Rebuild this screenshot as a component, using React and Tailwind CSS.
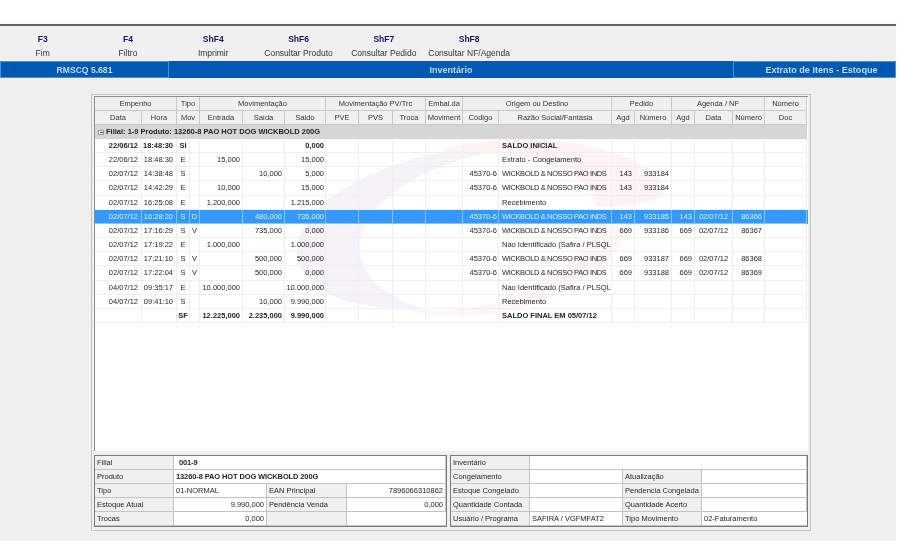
const GRID = "grid grid-cols-[47px_35px_13px_10px_43px_42px_41px_33px_34px_33px_37px_36px_113px_23px_37px_23px_38px_32px_42px]";
const align = [
  "text-right pr-[3px]", "text-right pr-[3px]", "text-center", "text-center",
  "text-right pr-[2px]", "text-right pr-[2px]", "text-right pr-[1px]", "", "", "", "",
  "text-right pr-[1px]", "text-left pl-[3px]", "text-right pr-[2px]", "text-right pr-[2px]", "text-right pr-[2px]",
  "text-center", "text-right pr-[2px]", "",
];

const W = "WICKBOLD & NOSSO PAO INDS";
const N = "Nao Identificado (Safira / PLSQL";
const rows = [
  { b: 1, c: ["22/06/12","18:48:30","SI","","","","0,000","","","","","","SALDO INICIAL","","","","","",""] },
  { c: ["22/06/12","18:48:30","E","","15,000","","15,000","","","","","","Extrato - Congelamento","","","","","",""] },
  { c: ["02/07/12","14:38:48","S","","","10,000","5,000","","","","","45370-6",W,"143","933184","","","",""] },
  { c: ["02/07/12","14:42:29","E","","10,000","","15,000","","","","","45370-6",W,"143","933184","","","",""] },
  { c: ["02/07/12","16:25:08","E","","1.200,000","","1.215,000","","","","","","Recebimento","","","","","",""] },
  { s: 1, c: ["02/07/12","16:28:20","S","D","","480,000","735,000","","","","","45370-6",W,"143","933185","143","02/07/12","86366",""] },
  { c: ["02/07/12","17:16:29","S","V","","735,000","0,000","","","","","45370-6",W,"669","933186","669","02/07/12","86367",""] },
  { c: ["02/07/12","17:19:22","E","","1.000,000","","1.000,000","","","","","",N,"","","","","",""] },
  { c: ["02/07/12","17:21:10","S","V","","500,000","500,000","","","","","45370-6",W,"669","933187","669","02/07/12","86368",""] },
  { c: ["02/07/12","17:22:04","S","V","","500,000","0,000","","","","","45370-6",W,"669","933188","669","02/07/12","86369",""] },
  { c: ["04/07/12","09:35:17","E","","10.000,000","","10.000,000","","","","","",N,"","","","","",""] },
  { c: ["04/07/12","09:41:10","S","","","10,000","9.990,000","","","","","","Recebimento","","","","","",""] },
  { b: 1, c: ["","","SF","","12.225,000","2.235,000","9.990,000","","","","","","SALDO FINAL EM 05/07/12","","","","","",""] },
];

const keys = [["F3","Fim"],["F4","Filtro"],["ShF4","Imprimir"],["ShF6","Consultar Produto"],["ShF7","Consultar Pedido"],["ShF8","Consultar NF/Agenda"]];

const head1 = [
  ["Empenho","col-span-2"],["Tipo","col-span-2"],["Movimentação","col-span-3"],["Movimentação PV/Trc","col-span-3"],
  ["Embal.da",""],["Origem ou Destino","col-span-2"],["Pedido","col-span-2"],["Agenda / NF","col-span-3"],["Número",""],
];
const head2 = [
  ["Data",""],["Hora",""],["Mov","col-span-2"],["Entrada",""],["Saída",""],["Saldo",""],["PVE",""],["PVS",""],["Troca",""],
  ["Moviment",""],["Código",""],["Razão Social/Fantasia",""],["Agd",""],["Número",""],["Agd",""],["Data",""],["Número",""],["Doc",""],
];

function HeadRow({ items }) {
  return (
    <div className={`${GRID} h-[14px]`}>
      {items.map(([t, span], i) => (
        <div key={i} className={`${span} overflow-hidden whitespace-nowrap border-r border-b border-[#c9c9c9] bg-[#f0f0f0] text-center leading-[14px] text-[#333333]`}>{t}</div>
      ))}
    </div>
  );
}

function Row({ r }) {
  return (
    <div className={`${GRID} h-[14.17px] ${r.s ? "bg-[#3399ff] text-[#dcebfb]" : "text-[#262626]"} ${r.b ? "font-bold" : ""}`}>
      {r.c.map((t, i) => (
        <div key={i} className={`${align[i]} overflow-hidden whitespace-nowrap border-r border-b leading-[14px] ${t === W ? "tracking-[-0.37px]" : ""} ${r.s ? "border-[#8cc4fb]" : "border-[#efefef]"}`}>{t}</div>
      ))}
    </div>
  );
}

function Cell({ t, label, right, span, bold }) {
  return (
    <div className={`${span || ""} h-[14px] overflow-hidden whitespace-nowrap border-r border-b border-[#c4c4c4] px-[2px] leading-[14px] last:border-r-0 ${label ? "bg-[#f0f0f0]" : "bg-[#ffffffe6]"} ${right ? "text-right" : ""} ${bold ? "font-bold tracking-[-0.12px]" : ""}`}>{t}</div>
  );
}

export default function App() {
  return (
    <div className="h-[541px] w-[899px] overflow-hidden bg-white font-['Liberation_Sans',Arial,sans-serif] text-[7.5px] text-[#262626] blur-[0.25px]">
      <div className="h-[24px]" />
      <div className="h-[517px] w-[896px] border-t-2 border-[#6f6168] bg-[#f0f0f0]">
        <div className="flex pt-[6px]">
          {keys.map(([k, l]) => (
            <div key={k} className="w-[85.3px] text-center">
              <div className="h-[14px] text-[8.5px] font-bold leading-[14px] text-[#14146e]">{k}</div>
              <div className="h-[14px] whitespace-nowrap text-[8.5px] leading-[14px] text-[#333333]">{l}</div>
            </div>
          ))}
        </div>
        <div className="mt-[1px] flex h-[17px] bg-[#0059b3] font-bold leading-[16px] text-[#c6d9ee]">
          <div className="w-[169px] border border-[#4d8fd0] text-center text-[8.6px]">RMSCQ 5.681</div>
          <div className="w-[564px] border-y border-[#0059b3] text-center text-[9px]">Inventário</div>
          <div className="flex-1 border border-[#4d8fd0] pl-[14px] text-center text-[9.1px]">Extrato de Itens - Estoque</div>
        </div>

        <div className="ml-[91px] mt-[16px] h-[437px] w-[720px] border border-[#c4c4c4] pl-[2px] pt-[1px]">
          <div className="relative h-[355px] w-[714px] border-l border-t border-[#8c8c8c] bg-white">
            <svg className="absolute left-0 top-0" width="713" height="354" viewBox="95 97 713 354" fill="none">
              <path d="M473 146 C 380 160 300 200 297 250 C 296 290 350 312 420 308 C 385 295 355 275 360 240 C 370 195 430 165 490 152 Z" fill="#f6f3f8" />
              <path d="M440 150 C 500 132 600 135 650 170 C 680 195 665 205 595 207 C 600 185 560 152 440 150 Z" fill="#fdf3f3" />
              <path d="M400 308 C 480 320 560 290 590 235 C 600 225 625 225 632 228 C 600 290 500 335 400 308 Z" fill="#fdf5f6" />
            </svg>
            <div className="relative">
              <HeadRow items={head1} />
              <HeadRow items={head2} />
              <div className="flex h-[14px] w-[712px] items-center gap-[2px] bg-[#d6d6d6] pl-[3px] font-bold text-[#222222]">
                <span className="flex h-[5px] w-[6px] items-center justify-center border border-[#9a9a9a] bg-[#eeeeee]"><span className="h-px w-[3px] bg-[#555555]" /></span>
                <span>Filial: 1-9 Produto: 13260-8 PAO HOT DOG WICKBOLD 200G</span>
              </div>
              {rows.map((r, i) => <Row key={i} r={r} />)}
            </div>
          </div>
          <div className="mt-[4px] flex gap-[3px]">
            <div className="grid w-[353px] grid-cols-[79px_93px_80px_99px] border border-[#7a7a7a]">
              <Cell label t="Filial" /><Cell span="col-span-3 pl-[5px]" bold t="001-9" />
              <Cell label t="Produto" /><Cell span="col-span-3" bold t="13260-8 PAO HOT DOG WICKBOLD 200G" />
              <Cell label t="Tipo" /><Cell t="01-NORMAL" /><Cell label t="EAN Principal" /><Cell right t="7896066310862" />
              <Cell label t="Estoque Atual" /><Cell right t="9.990,000" /><Cell label t="Pendência Venda" /><Cell right t="0,000" />
              <Cell label t="Trocas" /><Cell right t="0,000" /><Cell label t="" /><Cell t="" />
            </div>
            <div className="grid w-[358px] grid-cols-[79px_93px_79px_105px] border border-[#7a7a7a]">
              <Cell label t="Inventário" /><Cell span="col-span-3" t="" />
              <Cell label t="Congelamento" /><Cell t="" /><Cell label t="Atualização" /><Cell t="" />
              <Cell label t="Estoque Congelado" /><Cell t="" /><Cell label t="Pendencia Congelada" /><Cell t="" />
              <Cell label t="Quantidade Contada" /><Cell t="" /><Cell label t="Quantidade Acerto" /><Cell t="" />
              <Cell label t="Usuário / Programa" /><Cell t="SAFIRA / VGFMFAT2" /><Cell label t="Tipo Movimento" /><Cell t="02-Faturamento" />
            </div>
          </div>
        </div>
      </div>
    </div>
  );
}
